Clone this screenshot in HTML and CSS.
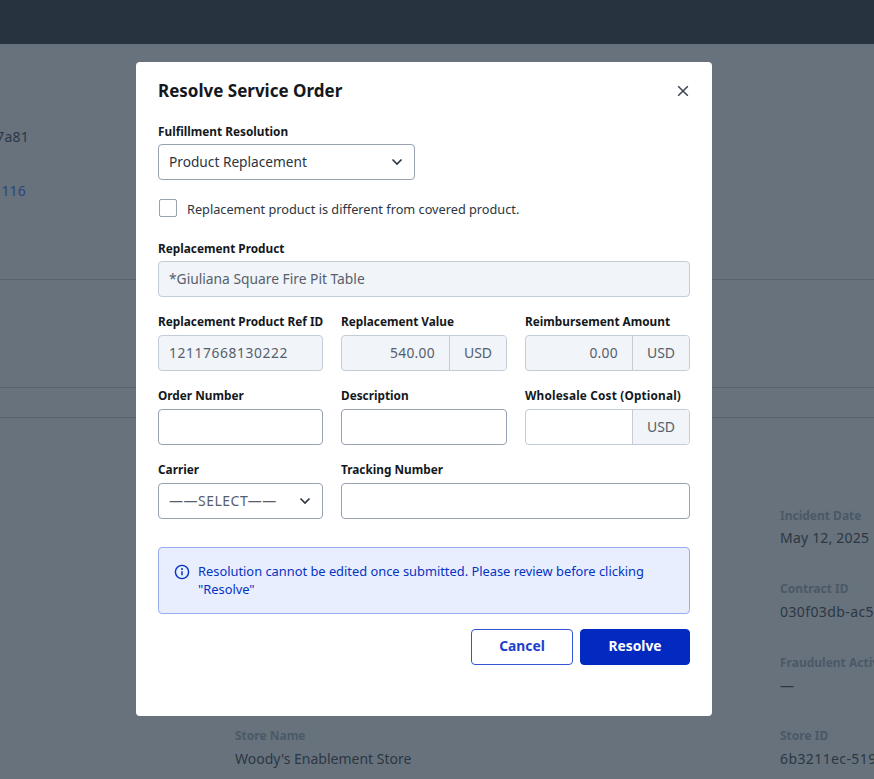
FILE: index.html
```html
<!DOCTYPE html>
<html lang="en">
<head>
<meta charset="utf-8">
<title>Resolve Service Order</title>
<link rel="stylesheet" href="styles.css">
</head>
<body>
<div class="page">
  <header class="topbar"></header>
  <main class="backdrop">
    <section class="summary">
      <div class="clip-value">7a81</div>
      <div class="clip-value link">116</div>
    </section>
    <hr class="rule rule-one">
    <hr class="rule rule-two">
    <hr class="rule rule-three">
    <section class="details">
      <div class="detail-col left-col">
        <div class="detail"><div class="detail-label">Store Name</div><div class="detail-value">Woody's Enablement Store</div></div>
      </div>
      <div class="detail-col right-col">
        <div class="detail"><div class="detail-label">Incident Date</div><div class="detail-value date-value">May 12, 2025</div></div>
        <div class="detail"><div class="detail-label">Contract ID</div><div class="detail-value id-value">030f03db-ac5</div></div>
        <div class="detail"><div class="detail-label">Fraudulent Activity</div><div class="detail-value">—</div></div>
        <div class="detail"><div class="detail-label">Store ID</div><div class="detail-value id-value">6b3211ec-519</div></div>
      </div>
    </section>
  </main>
</div>

<div class="modal" role="dialog" aria-labelledby="modal-title">
  <div class="modal-head">
    <h2 id="modal-title" class="modal-title">Resolve Service Order</h2>
    <button class="close" aria-label="Close">
      <svg width="12" height="12" viewBox="0 0 12 12"><path d="M1.2 1.2 10.8 10.8M10.8 1.2 1.2 10.8" stroke="#3b4450" stroke-width="1.5" fill="none"/></svg>
    </button>
  </div>

  <label class="label">Fulfillment Resolution</label>
  <div class="control select select-wide">
    <span class="select-text">Product Replacement</span>
    <svg class="chevron" width="12" height="8" viewBox="0 0 12 8"><path d="M1.5 1.5 6 6 10.5 1.5" stroke="#2c3540" stroke-width="1.6" fill="none"/></svg>
  </div>

  <div class="check-row">
    <span class="checkbox"></span>
    <span class="check-label">Replacement product is different from covered product.</span>
  </div>

  <label class="label">Replacement Product</label>
  <div class="control disabled"><span class="value">*Giuliana Square Fire Pit Table</span></div>

  <div class="grid">
    <div class="field">
      <label class="label">Replacement Product Ref ID</label>
      <div class="control disabled"><span class="value digits">12117668130222</span></div>
    </div>
    <div class="field">
      <label class="label">Replacement Value</label>
      <div class="control disabled group"><span class="value amount">540.00</span><span class="addon">USD</span></div>
    </div>
    <div class="field">
      <label class="label">Reimbursement Amount</label>
      <div class="control disabled group"><span class="value amount">0.00</span><span class="addon">USD</span></div>
    </div>
    <div class="field">
      <label class="label">Order Number</label>
      <div class="control"></div>
    </div>
    <div class="field">
      <label class="label">Description</label>
      <div class="control"></div>
    </div>
    <div class="field">
      <label class="label label-long">Wholesale Cost (Optional)</label>
      <div class="control group light"><span class="value amount"></span><span class="addon">USD</span></div>
    </div>
    <div class="field">
      <label class="label">Carrier</label>
      <div class="control select">
        <span class="select-text muted">——SELECT——</span>
        <svg class="chevron" width="12" height="8" viewBox="0 0 12 8"><path d="M1.5 1.5 6 6 10.5 1.5" stroke="#2c3540" stroke-width="1.6" fill="none"/></svg>
      </div>
    </div>
    <div class="field span-two">
      <label class="label">Tracking Number</label>
      <div class="control"></div>
    </div>
  </div>

  <div class="alert">
    <svg class="alert-icon" width="16" height="16" viewBox="0 0 16 16"><circle cx="8" cy="8" r="6.6" stroke="#0433c4" stroke-width="1.4" fill="none"/><circle cx="8" cy="5" r="1" fill="#0433c4"/><path d="M8 7.2v4" stroke="#0433c4" stroke-width="1.5"/></svg>
    <p class="alert-text">Resolution cannot be edited once submitted. Please review before clicking "Resolve"</p>
  </div>

  <div class="actions">
    <button class="btn btn-outline">Cancel</button>
    <button class="btn btn-primary">Resolve</button>
  </div>
</div>
</body>
</html>
```
FILE: styles.css
```css
* { box-sizing: border-box; }
html, body { margin: 0; height: 100%; overflow: hidden; }
body { font-family: "Noto Sans", "Open Sans", sans-serif; background: #67727d; color: #2c3742; }

.page { height: 779px; display: flex; flex-direction: column; }
.topbar { height: 44px; flex: none; background: #27343f; }
.backdrop { flex: 1; display: flex; flex-direction: column; overflow: hidden; }

.summary { padding-top: 83px; height: 235px; flex: none; }
.clip-value { width: 29px; height: 20px; line-height: 20px; font-size: 14px; margin-bottom: 34px; display: flex; justify-content: flex-end; white-space: nowrap; letter-spacing: .2px; }
.clip-value.link { width: 26px; color: #2a4480; }

.rule { margin: 0; border: 0; height: 1px; background: #58636e; flex: none; }
.rule-two { margin-top: 107px; }
.rule-three { margin-top: 29px; }

.details { flex: 1; display: flex; padding-left: 235px; }
.detail-col { display: flex; flex-direction: column; flex: none; }
.left-col { width: 545px; padding-top: 310px; }
.right-col { padding-top: 90px; white-space: nowrap; }
.detail { height: 73.4px; }
.left-col .detail { height: auto; }
.detail-label { font-size: 12px; font-weight: 700; line-height: 16px; color: #4b5967; }
.detail-value { font-size: 14px; line-height: 20px; margin-top: 5px; color: #2c3742; }
.id-value { letter-spacing: .4px; }
.date-value { letter-spacing: .2px; margin-top: 4px; }

.modal { position: fixed; left: 136px; top: 62px; width: 576px; height: 654px; background: #fff; border-radius: 4px; padding: 16px 22px; color: #14181d; }
.modal-head { display: flex; justify-content: space-between; align-items: center; height: 24px; margin-bottom: 21px; }
.modal-title { margin: 0; padding-top: 1px; font-size: 17px; line-height: 24px; font-weight: 700; color: #14181d; }
.close { border: 0; background: none; padding: 0; margin: 1px 1px 0 0; display: flex; }

.label { display: block; font-size: 11.8px; line-height: 16px; font-weight: 700; color: #14181d; margin-bottom: 5px; white-space: nowrap; }
.grid .label { margin-bottom: 6px; }
.label-long { letter-spacing: .17px; }

.control { height: 36px; border: 1px solid #98a2b0; border-radius: 4px; background: #fff; display: flex; align-items: center; font-size: 13.8px; overflow: hidden; }
.value { padding: 0 10px; color: #56606c; margin-bottom: 2px; }
.digits { letter-spacing: .6px; }
.disabled { background: #f1f4f8; border-color: #c4ccd6; }
.group .amount { flex: 1; text-align: right; padding: 0 14px 0 10px; letter-spacing: .3px; }
.addon { width: 57px; height: 100%; display: flex; align-items: center; justify-content: center; padding-bottom: 2px; background: #f1f4f8; border-left: 1px solid #c4ccd6; color: #56606c; flex: none; font-size: 14px; }
.light { border-color: #c4ccd6; }

.select { justify-content: space-between; padding: 0 11px 0 10px; }
.select-wide { width: 257px; }
.select-text { color: #2c3540; font-size: 13.7px; margin-bottom: 2px; }
.select-text.muted { color: #56606c; white-space: nowrap; font-size: 14px; letter-spacing: .5px; }

.check-row { display: flex; align-items: center; gap: 10px; margin: 19px 0 23px 1px; height: 18px; }
.checkbox { width: 18px; height: 18px; border: 1px solid #98a2b0; border-radius: 2px; background: #fff; flex: none; }
.check-label { font-size: 12.72px; color: #2c3540; margin-top: 2px; }

.grid { display: grid; grid-template-columns: 165px 166px 165px; column-gap: 18px; row-gap: 16px; margin-top: 16px; }
.span-two { grid-column: span 2; }

.alert { margin-top: 28px; height: 67px; display: flex; gap: 8px; padding: 14px 15px; background: #e8eefd; border: 1px solid #9aaceb; border-radius: 4px; color: #0433c4; }
.alert-icon { flex: none; margin-top: 2px; }
.alert-text { margin: 0; font-size: 12.85px; line-height: 18px; }

.actions { display: flex; justify-content: flex-end; gap: 7px; margin-top: 15px; }
.btn { height: 36px; border-radius: 4px; padding: 0 0 3px; font: 700 13.8px "Noto Sans", sans-serif; }
.btn-outline { width: 102px; background: #fff; border: 1px solid #3354d6; color: #1c40cc; }
.btn-primary { width: 110px; background: #0229c0; border: 1px solid #0229c0; color: #fff; }
```
